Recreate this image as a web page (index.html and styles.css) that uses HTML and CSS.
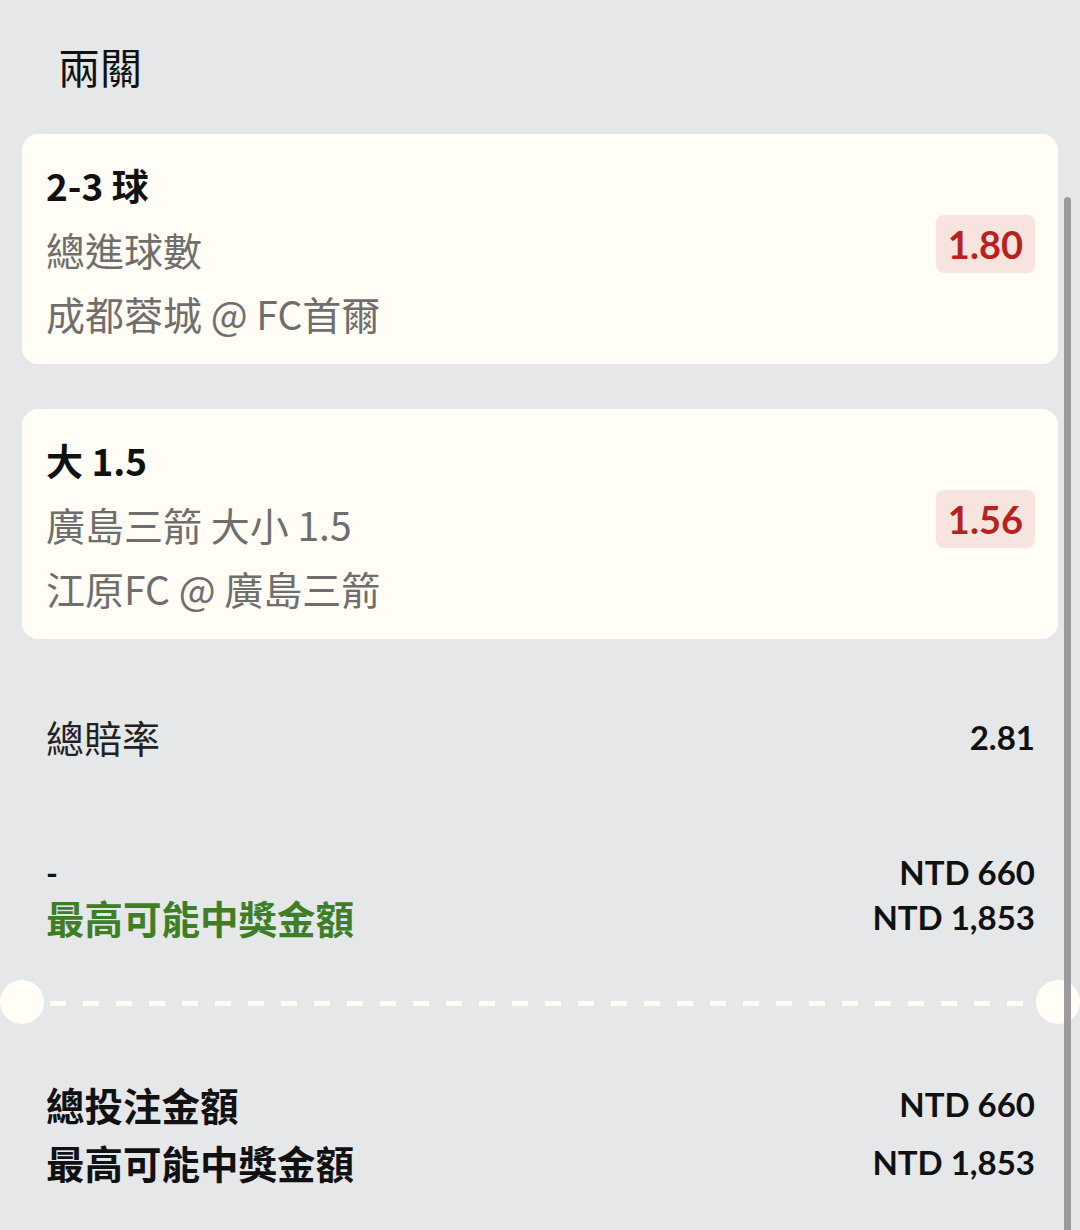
FILE: index.html
```html
<!DOCTYPE html>
<html lang="zh-Hant">
<head>
    <meta charset="UTF-8">
    <meta name="viewport" content="width=device-width, initial-scale=1.0">
    <title>兩關</title>
    <link rel="stylesheet" href="styles.css">
</head>
<body>
    <div class="page">
        <h2 class="title">兩關</h2>

        <div class="card">
            <div class="card-info">
                <div class="pick">2-3 球</div>
                <div class="line">總進球數</div>
                <div class="line">成都蓉城 @ FC首爾</div>
            </div>
            <div class="odds">1.80</div>
        </div>

        <div class="card">
            <div class="card-info">
                <div class="pick">大 1.5</div>
                <div class="line">廣島三箭 大小 1.5</div>
                <div class="line">江原FC @ 廣島三箭</div>
            </div>
            <div class="odds">1.56</div>
        </div>

        <div class="row total-odds">
            <span>總賠率</span>
            <span class="value">2.81</span>
        </div>

        <div class="row win-block">
            <div class="labels">
                <div class="dash-label">-</div>
                <div class="green">最高可能中獎金額</div>
            </div>
            <div class="values">
                <div>NTD 660</div>
                <div>NTD 1,853</div>
            </div>
        </div>

        <div class="divider">
            <span class="hole"></span>
            <span class="dashes"></span>
            <span class="hole"></span>
        </div>

        <div class="row summary">
            <div class="labels">
                <div>總投注金額</div>
                <div>最高可能中獎金額</div>
            </div>
            <div class="values">
                <div>NTD 660</div>
                <div>NTD 1,853</div>
            </div>
        </div>

        <div class="scrollbar"></div>
    </div>
</body>
</html>
```

FILE: styles.css
```css
body {
    margin: 0;
    background-color: #e6e7e9;
    font-family: "Noto Sans CJK TC", sans-serif;
    color: #111;
}
.page {
    position: relative;
    height: 1230px;
    overflow: hidden;
}
.title {
    margin: 0;
    padding: 42px 0 3px 58px;
    font-size: 42px;
    font-weight: 400;
    line-height: 48px;
}
.card {
    display: flex;
    justify-content: space-between;
    align-items: center;
    margin: 41px 22px 0 22px;
    padding: 19px 23px 19px 24px;
    background: #fffdf6;
    border-radius: 16px;
}
.card + .card {
    margin-top: 45px;
}
.pick {
    font-size: 37px;
    font-weight: 700;
    line-height: 64px;
    height: 64px;
}
.line {
    font-size: 39px;
    line-height: 64px;
    height: 64px;
    color: #6f6e6c;
}
.odds {
    margin-top: -10px;
    height: 58px;
    line-height: 58px;
    padding: 0 12px;
    background: #f8e4df;
    border-radius: 8px;
    color: #b8221e;
    font-family: Lato, sans-serif;
    font-size: 38px;
    font-weight: 700;
}
.row {
    display: flex;
    justify-content: space-between;
    align-items: center;
    padding: 0 45px 0 46px;
}
.total-odds {
    margin-top: 75px;
    line-height: 46px;
    font-size: 38px;
    color: #222;
}
.value, .values {
    font-family: Lato, sans-serif;
    font-size: 33px;
    font-weight: 700;
    text-align: right;
    color: #111;
}
.win-block {
    margin-top: 90px;
    line-height: 45px;
}
.dash-label {
    font-family: Lato, sans-serif;
    font-size: 32px;
    font-weight: 700;
}
.green {
    font-size: 38.5px;
    font-weight: 700;
    color: #3d7e27;
}
.divider {
    display: flex;
    align-items: center;
    margin-top: 40px;
    height: 44px;
}
.hole {
    width: 44px;
    height: 44px;
    flex: none;
    border-radius: 50%;
    background: #fffdf5;
}
.dashes {
    flex: 1;
    height: 5px;
    margin: 2px 0 0 6px;
    background: repeating-linear-gradient(90deg, #fffdf5 0, #fffdf5 16px, transparent 16px, transparent 33px);
}
.summary {
    margin-top: 51px;
    line-height: 58px;
    font-weight: 700;
}
.summary .labels {
    font-size: 38.5px;
}
.scrollbar {
    position: absolute;
    top: 197px;
    bottom: 0;
    left: 1064px;
    width: 7px;
    background: #9b9b9d;
    border-radius: 4px 4px 0 0;
}
```
